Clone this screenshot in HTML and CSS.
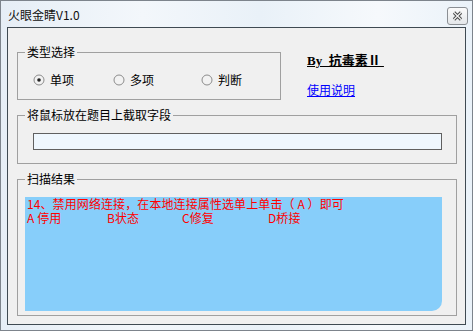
FILE: index.html
```html
<!DOCTYPE html>
<html lang="zh-CN">

<head>
    <meta charset="UTF-8">
    <title>火眼金睛V1.0</title>
    <link rel="stylesheet" href="styles.css">
</head>

<body>
    <div class="window">
        <div class="titlebar">
            <span class="title">火眼金睛V1.0</span>
            <button class="close" title="关闭">
                <svg width="11" height="10" viewBox="0 0 11 10">
                    <path d="M2 1.5 L9 8.5 M9 1.5 L2 8.5" stroke="#4a4a4a" stroke-width="3.2" fill="none" />
                    <path d="M2 1.5 L9 8.5 M9 1.5 L2 8.5" stroke="#f4f4f4" stroke-width="1.2" fill="none" />
                </svg>
            </button>
        </div>
        <div class="client">
            <div class="top-row">
                <fieldset class="group group-type">
                    <legend>类型选择</legend>
                    <div class="radios">
                        <label class="radio">
                            <svg width="12" height="12" viewBox="0 0 12 12">
                                <circle cx="6" cy="6" r="5" fill="#f2f2f2" stroke="#8c8c8c" />
                                <circle cx="6" cy="6" r="1.8" fill="#222" />
                            </svg>
                            单项
                        </label>
                        <label class="radio">
                            <svg width="12" height="12" viewBox="0 0 12 12">
                                <circle cx="6" cy="6" r="5" fill="#f2f2f2" stroke="#8c8c8c" />
                            </svg>
                            多项
                        </label>
                        <label class="radio">
                            <svg width="12" height="12" viewBox="0 0 12 12">
                                <circle cx="6" cy="6" r="5" fill="#f2f2f2" stroke="#8c8c8c" />
                            </svg>
                            判断
                        </label>
                    </div>
                </fieldset>
                <div class="info">
                    <div class="author">By&nbsp; 抗毒素Ⅱ&nbsp;</div>
                    <a class="help" href="#">使用说明</a>
                </div>
            </div>
            <fieldset class="group group-grab">
                <legend>将鼠标放在题目上截取字段</legend>
                <div class="field"></div>
            </fieldset>
            <fieldset class="group group-result">
                <legend>扫描结果</legend>
                <div class="result">
                    <div class="line">14、禁用网络连接，在本地连接属性选单上单击（ A ）即可</div>
                    <div class="line options">
                        <span class="opt-a">A 停用</span>
                        <span class="opt-b">B状态</span>
                        <span class="opt-c">C修复</span>
                        <span>D桥接</span>
                    </div>
                </div>
            </fieldset>
        </div>
    </div>
</body>

</html>
```

FILE: styles.css
```css
* {
    box-sizing: border-box;
}

body {
    margin: 0;
    font-family: "Noto Sans CJK SC", sans-serif;
    font-size: 12px;
    color: #000;
}

.window {
    width: 473px;
    height: 331px;
    border: 1px solid #7d848c;
    background: linear-gradient(90deg, #e6eef6 0%, #f3f7fb 30%, #e9f1f8 55%, #f6f9fc 80%, #eaf2f9 100%);
    overflow: hidden;
}

.titlebar {
    height: 26px;
    display: flex;
    justify-content: space-between;
    align-items: flex-start;
    padding: 0 4px 0 7px;
}

.title {
    margin-top: 7px;
    line-height: 14px;
    color: #111;
}

.close {
    margin-top: 6px;
    width: 21px;
    height: 18px;
    padding: 0;
    border: 1px solid #8b8f94;
    border-radius: 3px;
    background: linear-gradient(#fbfbfb, #e4e7ea);
    display: flex;
    align-items: center;
    justify-content: center;
}

.client {
    height: 298px;
    margin: 0 6px;
    border: 1px solid #3f4a52;
    background: #f0f0f0;
    padding: 17px 8px 0 9px;
}

.top-row {
    display: flex;
    gap: 26px;
}

.group {
    margin: 0;
    border: 1px solid #a0a0a0;
    padding: 0 7px;
    min-width: 0;
}

.group legend {
    padding: 0 2px;
    line-height: 14px;
}

.group-type {
    width: 264px;
    padding-top: 13px;
    padding-bottom: 11px;
}

.radios {
    display: flex;
    height: 16px;
    align-items: center;
}

.radio {
    display: flex;
    align-items: center;
    gap: 5px;
    line-height: 16px;
}

.radio:nth-child(1) {
    margin-left: 8px;
    width: 80px;
}

.radio:nth-child(2) {
    width: 88px;
}

.info {
    padding-top: 8px;
}

.author {
    font-weight: bold;
    font-size: 13px;
    line-height: 16px;
    text-decoration: underline;
    font-family: "Liberation Serif", "Noto Sans CJK SC", serif;
}

.help {
    display: inline-block;
    margin-top: 14px;
    color: #0000ff;
    line-height: 14px;
}

.group-grab {
    margin-top: 8px;
    padding-top: 11px;
    padding-bottom: 13px;
}

.field {
    height: 17px;
    margin: 0 7px 0 8px;
    border: 1px solid #606060;
    background: #eff7fe;
}

.group-result {
    margin-top: 8px;
    padding-top: 11px;
    padding-bottom: 4px;
}

.result {
    height: 114px;
    margin-right: 7px;
    background: #87cefa;
    border-bottom-right-radius: 10px;
    color: #ff0000;
    padding: 0 2px;
    font-size: 12px;
    letter-spacing: 0.1px;
}

.line {
    height: 14px;
    line-height: 14px;
    white-space: nowrap;
}

.options {
    display: flex;
}

.options span {
    display: inline-block;
}

.opt-a {
    width: 80px;
}

.opt-b {
    width: 75px;
}

.opt-c {
    width: 86px;
}
```
